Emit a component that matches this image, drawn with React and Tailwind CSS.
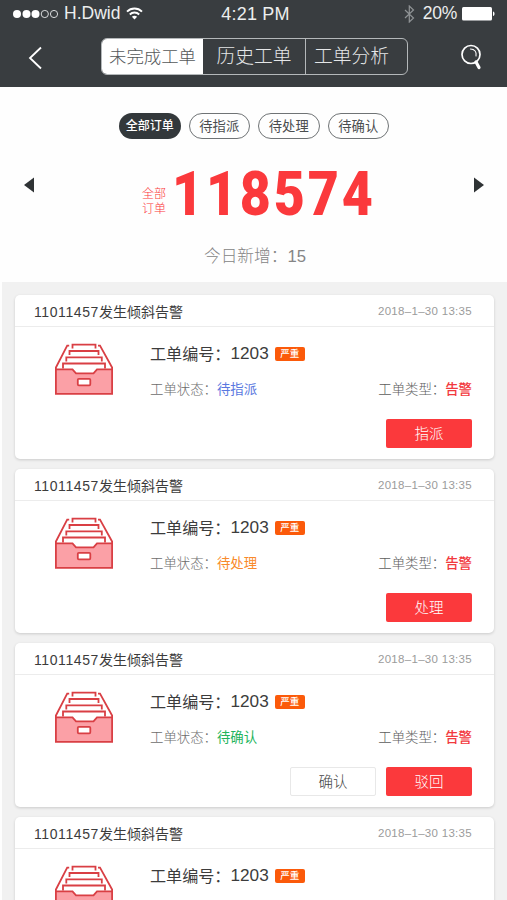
import React from "react";

const tabs = [
  { label: "未完成工单", className: "w-[101px] bg-white text-[#55585a] text-[17.4px] rounded-l-[5px]" },
  { label: "历史工单", className: "w-[102px] text-[#e4e6e7] text-[18.8px]" },
  { label: "工单分析", className: "w-[102px] text-[#e4e6e7] text-[18.8px] border-l border-[#b4b8ba] pr-2.5" },
];

const filters = ["全部订单", "待指派", "待处理", "待确认"];

const orders = [
  { id: 1, status: "待指派", color: "text-[#5a78e0]", actions: ["指派"] },
  { id: 2, status: "待处理", color: "text-[#f98a2b]", actions: ["处理"] },
  { id: 3, status: "待确认", color: "text-[#22b45c]", actions: ["确认", "驳回"] },
  { id: 4, status: "待指派", color: "text-[#5a78e0]", actions: ["指派"] },
];

function StatusBar() {
  return (
    <div className="grid h-[27px] grid-cols-3 items-center px-[12px] text-[18px] leading-none text-[#eceeee]">
      <div className="flex items-center">
        <svg width="47" height="10" viewBox="0 0 47 10" fill="none" stroke="#d8dadb">
          <circle cx="5" cy="5" r="4" fill="#fff" stroke="none" />
          <circle cx="14.5" cy="5" r="4" fill="#fff" stroke="none" />
          <circle cx="23.5" cy="5" r="4" fill="#fff" stroke="none" />
          <circle cx="32.8" cy="5" r="3.6" />
          <circle cx="42" cy="5" r="3.6" />
        </svg>
        <span className="ml-[5px] text-[17.5px]">H.Dwid</span>
        <svg className="ml-[6px]" width="17" height="13" viewBox="0 0 17 13" fill="none" stroke="#fff" strokeWidth="1.9">
          <path d="M1 4.6C5.2.4 11.8.4 16 4.6" />
          <path d="M3.8 7.5c2.6-2.6 6.8-2.6 9.4 0" />
          <path d="M8.5 12.4 5.9 9.8c1.5-1.4 3.7-1.4 5.2 0z" fill="#fff" stroke="none" />
        </svg>
      </div>
      <div className="pl-1 text-center tracking-[0.2px]">4:21 PM</div>
      <div className="flex items-center justify-end">
        <svg width="11" height="18" viewBox="0 0 11 18" fill="none" stroke="#8f9395" strokeWidth="1.2">
          <path d="M1 5l8.5 8L5.3 17V1l4.2 4L1 13" />
        </svg>
        <span className="ml-[8px] text-[17.5px] tracking-[-0.3px]">20%</span>
        <svg className="ml-[5px]" width="33" height="14" viewBox="0 0 33 14" fill="#fff">
          <rect width="30" height="13.5" rx="1.5" />
          <path d="M31 4.5c2 .5 2 4 0 4.5z" />
        </svg>
      </div>
    </div>
  );
}

function NavBar() {
  return (
    <div className="flex h-[60px] items-start pt-[11px]">
      <svg className="mt-[8px] ml-[28px]" width="14" height="24" viewBox="0 0 14 24" fill="none" stroke="#fff" strokeWidth="1.8">
        <path d="M13 1.5 2 12l11 10.5" />
      </svg>
      <div className="ml-[59px] flex h-[37px] w-[307px] rounded-[6px] border border-[#b4b8ba]">
        {tabs.map((tab) => (
          <button key={tab.label} className={`flex items-center justify-center whitespace-nowrap pt-[2px] font-light leading-none ${tab.className}`}>
            {tab.label}
          </button>
        ))}
      </div>
      <svg className="mt-[6px] ml-[52px]" width="22" height="27" viewBox="0 0 22 27" fill="none" stroke="#fff" strokeLinecap="round">
        <circle cx="11" cy="10.5" r="9" strokeWidth="1.7" />
        <path d="M10.5 5c4 0 6.5 3 5.5 7" strokeWidth="1.1" />
        <path d="M16 18l3 5.5" strokeWidth="3.2" />
      </svg>
    </div>
  );
}

function Summary() {
  return (
    <section className="h-[195px] bg-[#fefefe] pt-[26px]">
      <div className="flex justify-center gap-[8px] pl-px">
        {filters.map((name, i) => (
          <button
            key={name}
            className={
              i === 0
                ? "h-[26px] w-[61.5px] rounded-full bg-[#33383b] text-[12px] font-medium leading-none text-white"
                : "h-[26px] w-[61.5px] rounded-full border border-[#6f7375] pt-px text-[13.3px] leading-none text-[#4a4d4f]"
            }
          >
            {name}
          </button>
        ))}
      </div>

      <div className="mt-[22px] flex h-[68px] items-center justify-between pr-[23px] pl-[24px]">
        <svg className="mb-[21px]" width="10" height="16" viewBox="0 0 10 16" fill="#2f3335">
          <path d="M10 .5v15L0 8z" />
        </svg>
        <div className="ml-[9px] flex items-center text-[#fb393c]">
          <div className="mt-[14px] w-[25px] text-[12px] font-light leading-[15px]">
            全部
            <br />
            订单
          </div>
          <div className="mb-px ml-[5px] w-[203px] origin-left scale-x-[0.88] font-[Roboto] text-[61px] font-black leading-[67px] tracking-[3.2px]">
            118574
          </div>
        </div>
        <svg className="mb-[21px]" width="10" height="16" viewBox="0 0 10 16" fill="#2f3335">
          <path d="M0 .5v15L10 8z" />
        </svg>
      </div>

      <div className="mt-[18px] pl-[3px] text-center text-[16.7px] font-light leading-[20px] text-[#858585]">
        今日新增：15
      </div>
    </section>
  );
}

function CabinetIcon() {
  return (
    <svg width="60" height="53" viewBox="0 0 60 53" fill="none" stroke="#d93f44" strokeWidth="1.8">
      <path d="M1.9 26.3h16.6l3.5 4h17.5l3.5-4h15.1v24.5H1.9z" fill="#fba0a6" />
      <path d="M1.9 26.3V24.5L13.2 2.6h2M58.1 26.3V24.5L46 2.6h-2" />
      <path d="M18.5 5.5V1.6h23v3.9" />
      <path d="M15.5 12V8h29v4" />
      <path d="M12.3 18.5v-4.2h35.5v4.2" />
      <path d="M9 25.5v-5h42v5" />
      <rect x="23.8" y="35.8" width="12.5" height="6.5" rx="1" fill="#fff" />
    </svg>
  );
}

function OrderCard({ order }) {
  return (
    <article className="h-[164px] shrink-0 rounded-[5px] bg-white shadow-[0_1px_3px_rgba(0,0,0,0.16)]">
      <header className="flex h-[32px] items-center justify-between border-b border-[#ececec] pt-[2px] pr-[22px] pl-[19px]">
        <h2 className="text-[14px] leading-none text-[#3c3c3c]">
          <span className="tracking-[0.6px]">11011457</span>发生倾斜告警
        </h2>
        <time className="text-[11.5px] leading-none tracking-[0.3px] text-[#9b9b9b]">2018–1–30 13:35</time>
      </header>
      <div className="flex pr-[22px] pl-[39px]">
        <div className="mt-[16px] h-[53px] w-[60px]">
          <CabinetIcon />
        </div>
        <div className="ml-[36px] flex-1">
          <div className="mt-[17px] flex h-[20px] items-center text-[16.1px] leading-none text-[#3c3c3c]">
            工单编号：<span className="text-[17.2px]">1203</span>
            <span className="ml-[6px] flex h-[14px] w-[30px] items-center justify-center rounded-[2px] bg-[#fb5a0a] text-[9.5px] font-medium text-white">
              严重
            </span>
          </div>
          <div className="mt-[16px] flex h-[20px] items-center justify-between text-[13.4px] leading-none">
            <div className="font-light text-[#6d6d6d]">
              工单状态：<span className={`font-normal ${order.color}`}>{order.status}</span>
            </div>
            <div className="font-light text-[#5d5d5d]">
              工单类型：<span className="font-medium text-[#f2393e]">告警</span>
            </div>
          </div>
          <div className="mt-[19px] flex justify-end gap-[10px]">
            {order.actions.map((action, i) => (
              <button
                key={action}
                className={
                  i === order.actions.length - 1
                    ? "h-[29px] w-[86px] rounded-[2px] bg-[#fb393c] pt-px text-[14.5px] font-light leading-none text-white"
                    : "h-[29px] w-[86px] rounded-[2px] border border-[#e8e8e8] pt-px text-[14.5px] font-light leading-none text-[#444]"
                }
              >
                {action}
              </button>
            ))}
          </div>
        </div>
      </div>
    </article>
  );
}

export default function App() {
  return (
    <div className="flex h-[900px] w-[507px] flex-col overflow-hidden bg-[#fefefe] font-['Liberation_Sans','Noto_Sans_CJK_SC',sans-serif]">
      <div className="h-[87px] shrink-0 bg-[#393d40]">
        <StatusBar />
        <NavBar />
      </div>
      <Summary />
      <main className="ml-[2px] flex min-h-0 flex-1 flex-col gap-[10px] bg-[#f1f1f1] pt-[13px] pr-[13px] pl-[13px]">
        {orders.map((order) => (
          <OrderCard key={order.id} order={order} />
        ))}
      </main>
    </div>
  );
}
